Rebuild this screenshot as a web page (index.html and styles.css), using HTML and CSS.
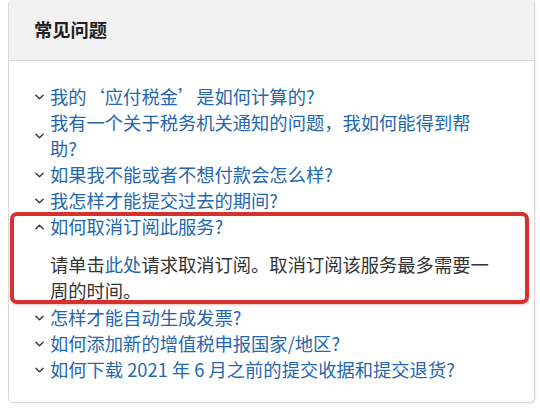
FILE: index.html
```html
<!DOCTYPE html>
<html lang="zh-CN">
<head>
<meta charset="utf-8">
<link rel="stylesheet" href="styles.css">
</head>
<body>
<section class="card">
  <header class="card-head">
    <h2 class="title">常见问题</h2>
  </header>
  <ul class="faq">
    <li class="faq-item">
      <div class="q"><svg class="chev" viewBox="0 0 10 6"><path d="M1 1 L5 5 L9 1"/></svg><a class="q-text">我的‘应付税金’是如何计算的?</a></div>
    </li>
    <li class="faq-item">
      <div class="q"><svg class="chev" viewBox="0 0 10 6"><path d="M1 1 L5 5 L9 1"/></svg><a class="q-text">我有一个关于税务机关通知的问题，我如何能得到帮助?</a></div>
    </li>
    <li class="faq-item">
      <div class="q"><svg class="chev" viewBox="0 0 10 6"><path d="M1 1 L5 5 L9 1"/></svg><a class="q-text">如果我不能或者不想付款会怎么样?</a></div>
    </li>
    <li class="faq-item">
      <div class="q"><svg class="chev" viewBox="0 0 10 6"><path d="M1 1 L5 5 L9 1"/></svg><a class="q-text">我怎样才能提交过去的期间?</a></div>
    </li>
    <li class="faq-item open">
      <div class="q"><svg class="chev" viewBox="0 0 10 6"><path d="M1 5 L5 1 L9 5"/></svg><a class="q-text">如何取消订阅此服务?</a></div>
      <p class="answer"><span>请单击</span><a class="inline-link">此处</a><span>请求取消订阅。取消订阅该服务最多需要一周的时间。</span></p>
    </li>
    <li class="faq-item">
      <div class="q"><svg class="chev" viewBox="0 0 10 6"><path d="M1 1 L5 5 L9 1"/></svg><a class="q-text">怎样才能自动生成发票?</a></div>
    </li>
    <li class="faq-item">
      <div class="q"><svg class="chev" viewBox="0 0 10 6"><path d="M1 1 L5 5 L9 1"/></svg><a class="q-text">如何添加新的增值税申报国家/地区?</a></div>
    </li>
    <li class="faq-item">
      <div class="q"><svg class="chev" viewBox="0 0 10 6"><path d="M1 1 L5 5 L9 1"/></svg><a class="q-text">如何下载 2021 年 6 月之前的提交收据和提交退货?</a></div>
    </li>
  </ul>
</section>
</body>
</html>
```

FILE: styles.css
```css
html, body {
  margin: 0;
  padding: 0;
  background: #ffffff;
}

body {
  font-family: "Noto Sans CJK SC", "Noto Sans", sans-serif;
  width: 540px;
  height: 409px;
  overflow: hidden;
}

.card {
  margin: -1px 5px 0 8px;
  width: 527px;
  box-sizing: border-box;
  border: 1px solid #d9d9d9;
  border-radius: 5px;
  background: #ffffff;
  box-shadow: 1px 1px 2px rgba(0, 0, 0, 0.07);
}

.card-head {
  height: 61px;
  box-sizing: border-box;
  background: #f2f2f2;
  border-bottom: 1px solid #dcdcdc;
  display: flex;
  align-items: center;
  padding-left: 25px;
}

.title {
  margin: 0;
  font-size: 18.3px;
  font-weight: 700;
  color: #222222;
  line-height: 26px;
  margin-top: -3px;
}

.faq {
  list-style: none;
  margin: 0;
  padding: 22px 0 20px 0;
}

.faq-item {
  padding-left: 26px;
  position: relative;
}

.q {
  display: flex;
  align-items: center;
}

.chev {
  width: 9px;
  height: 6px;
  flex: 0 0 9px;
  margin-right: 6px;
  margin-top: 1px;
  fill: none;
  stroke: #3a3a3a;
  stroke-width: 1.6;
  stroke-linecap: round;
  stroke-linejoin: round;
}

.q-text {
  width: 443px;
  font-size: 18.3px;
  line-height: 26px;
  color: #2467b0;
  text-decoration: none;
}

.answer {
  margin: 12px 0 1px 15px;
  width: 443px;
  font-size: 18.3px;
  line-height: 26px;
  color: #333333;
}

.inline-link {
  color: #2467b0;
  text-decoration: none;
}

.open::after {
  content: "";
  position: absolute;
  top: -1px;
  left: 1px;
  right: 5px;
  bottom: -1px;
  border: 4px solid #d8302d;
  border-radius: 7px;
  box-shadow: 0 1px 2px rgba(160, 0, 0, 0.25);
  pointer-events: none;
}
```
